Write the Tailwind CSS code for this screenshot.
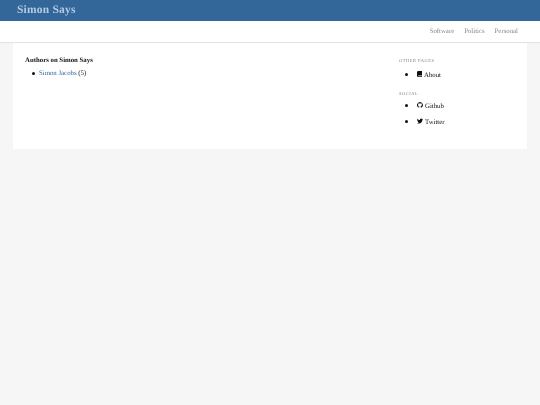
<!DOCTYPE html>
<html lang="en">
<head>
  <meta charset="UTF-8">
  <title>Simon Says</title>
  <script src="https://cdn.jsdelivr.net/npm/@tailwindcss/browser@4"></script>
</head>
<body class="bg-[#f6f6f6] text-[#111] font-['Liberation_Serif',serif] text-[6.8px] leading-[13px] h-[405px] overflow-hidden [text-rendering:geometricPrecision]">
  <div class="blur-[0.3px] h-[405px]">
  <!-- Header -->
  <header class="bg-[#336699] h-[21px] pl-[17px] flex items-center">
    <a class="text-[11.5px] font-bold text-[#b4cbe3] tracking-[0.2px]">Simon Says</a>
  </header>
  <nav class="relative bg-white h-[21px] flex items-center justify-end gap-[10px] pr-[22px] shadow-[0_1px_1px_rgba(0,0,0,0.07)] text-[#888]">
    <a>Software</a>
    <a>Politics</a>
    <a>Personal</a>
  </nav>
  <!-- Content -->
  <main class="bg-white mx-[13px] mt-[1px] h-[106px] flex justify-between pl-[12px] pt-[11px]">
    <section>
      <h2 class="font-bold">Authors on Simon Says</h2>
      <ul class="pl-[7px]">
        <li class="flex items-center gap-[4px]"><span class="w-[3px] h-[3px] rounded-full bg-[#111]"></span><span><a class="text-[#336699]">Simon Jacobs</a> (5)</span></li>
      </ul>
    </section>
    <aside class="w-[128px] pt-[3px]">
      <h3 class="text-[4.5px] tracking-[0.5px] uppercase text-[#888] leading-[8px]">Other pages</h3>
      <ul class="pl-[6px] mt-[4px]">
        <li class="flex items-center gap-[9px] h-[13px] mb-[3px]">
          <span class="w-[3px] h-[3px] rounded-full bg-[#111] -translate-y-[1px]"></span>
          <span class="inline-flex items-center gap-[2px]">
            <svg class="w-[5px] h-[6px] -translate-y-[2px]" viewBox="0 0 12 14"><path fill="#111" d="M3 0h9v10.500H3.500a1 1 0 0 0 0 2H12V14H3a3 3 0 0 1-3-3V3a3 3 0 0 1 3-3z"/></svg>
            About
          </span>
        </li>
      </ul>
      <h3 class="text-[4.5px] tracking-[0.5px] uppercase text-[#888] leading-[8px] mt-[8px]">Social</h3>
      <ul class="pl-[6px] mt-[2px]">
        <li class="flex items-center gap-[9px] h-[13px] mb-[3px]">
          <span class="w-[3px] h-[3px] rounded-full bg-[#111] -translate-y-[1px]"></span>
          <span class="inline-flex items-center gap-[2px]">
            <svg class="w-[6px] h-[6px] -translate-y-[2px]" viewBox="0 0 16 16"><path fill="#111" d="M8 0a8 8 0 0 0-2.500 15.600c.4.100.5-.2.5-.4v-1.400c-2.200.5-2.700-1-2.700-1-.4-.9-.9-1.200-.9-1.200-.7-.5.1-.5.1-.5.8.1 1.200.8 1.200.8.7 1.200 1.900.9 2.300.7.1-.5.3-.9.5-1.100-1.800-.2-3.600-.9-3.600-4 0-.9.3-1.600.8-2.100-.1-.2-.4-1 .1-2.100 0 0 .7-.2 2.200.8a7.600 7.600 0 0 1 4 0c1.500-1 2.200-.8 2.200-.8.4 1.100.2 1.900.1 2.100.5.600.8 1.300.8 2.100 0 3.100-1.900 3.700-3.700 3.900.3.3.6.8.6 1.500v2.200c0 .2.1.5.6.4A8 8 0 0 0 8 0z"/></svg>
            Github
          </span>
        </li>
        <li class="flex items-center gap-[9px] h-[13px] mb-[3px]">
          <span class="w-[3px] h-[3px] rounded-full bg-[#111] -translate-y-[1px]"></span>
          <span class="inline-flex items-center gap-[2px]">
            <svg class="w-[6px] h-[6px] -translate-y-[2px]" viewBox="0 0 24 24"><path fill="#111" d="M23.950 4.570a10 10 0 0 1-2.820.770 4.960 4.960 0 0 0 2.160-2.720c-.950.550-2 .950-3.130 1.180a4.920 4.920 0 0 0-8.380 4.480C7.690 8.100 4.070 6.130 1.640 3.160a4.820 4.820 0 0 0-.67 2.480c0 1.710.870 3.210 2.190 4.100a4.900 4.900 0 0 1-2.230-.620v.060a4.920 4.920 0 0 0 3.950 4.830 5 5 0 0 1-2.210.080 4.940 4.940 0 0 0 4.600 3.420A9.870 9.870 0 0 1 0 19.540a14 14 0 0 0 7.560 2.210c9.050 0 14-7.500 14-13.980 0-.210 0-.420-.020-.630a9.940 9.940 0 0 0 2.460-2.550z"/></svg>
            Twitter
          </span>
        </li>
      </ul>
    </aside>
  </main>
  </div>
</body>
</html>
